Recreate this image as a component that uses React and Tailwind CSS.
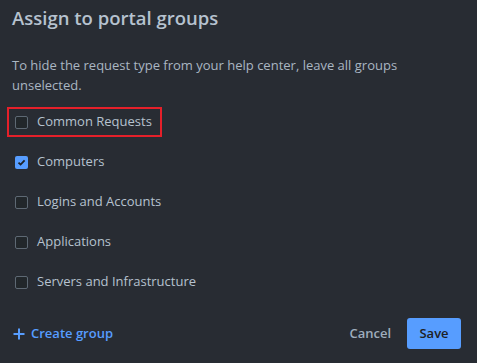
import React, { useState } from "react";

const groups = [
    { name: "Common Requests", checked: false, highlight: true },
    { name: "Computers", checked: true },
    { name: "Logins and Accounts", checked: false },
    { name: "Applications", checked: false },
    { name: "Servers and Infrastructure", checked: false },
];

const Box = ({ checked }) =>
    checked ? (
        <span className="w-[13px] h-[13px] rounded-[2px] bg-[#579dff] flex items-center justify-center">
            <svg width="9" height="9" viewBox="0 0 9 9">
                <path d="M1.5 4.6 L3.6 6.6 L7.6 2.4" fill="none" stroke="#1d2125" strokeWidth="1.8" />
            </svg>
        </span>
    ) : (
        <span className="w-[13px] h-[13px] rounded-[2px] border-[1.5px] border-[#5e6974] bg-[#22272b]" />
    );

const App = () => {
    const [items, setItems] = useState(groups);
    const toggle = (i) => {
        setItems(items.map((g, j) => (j === i ? { ...g, checked: !g.checked } : g)));
    };
    return (
        <div className="w-[477px] h-[363px] bg-[#282c33] text-[#b6c2cf] font-['Open_Sans',sans-serif] overflow-hidden">
            <h1 className="pt-[6px] px-3 text-[18.5px] leading-6 font-semibold text-[#b6c2cf]">
                Assign to portal groups
            </h1>
            <p className="mt-[25px] px-3 text-[13px] leading-5 text-[#aab6c2]">
                To hide the request type from your help center, leave all groups unselected.
            </p>
            <div className="mt-[7px]">
                {items.map((g, i) => (
                    <div key={g.name} className="h-10 flex items-center px-[7px]">
                        <label
                            onClick={() => toggle(i)}
                            className={
                                "h-[30px] flex items-center gap-[9px] pl-[6px] pr-[8px] border-2 cursor-pointer " +
                                (g.highlight ? "border-[#e5202a]" : "border-transparent")
                            }
                        >
                            <Box checked={g.checked} />
                            <span className="text-[13px] text-[#b6c2cf]">{g.name}</span>
                        </label>
                    </div>
                ))}
            </div>
            <div className="mt-[16px] pl-[13px] pr-4 flex items-center justify-between">
                <button className="flex items-center gap-[6px] text-[13px] font-semibold text-[#579dff]">
                    <svg width="12" height="12" viewBox="0 0 12 12">
                        <path d="M6 0.5 V11.5 M0.5 6 H11.5" stroke="#579dff" strokeWidth="2" />
                    </svg>
                    Create group
                </button>
                <div className="flex items-center gap-1">
                    <button className="h-[31px] px-3 text-[13px] font-semibold text-[#9fadbc]">Cancel</button>
                    <button className="h-[31px] w-[54px] rounded-[3px] bg-[#579dff] text-[13px] font-semibold text-[#1d2125]">
                        Save
                    </button>
                </div>
            </div>
        </div>
    );
};

export default App;
